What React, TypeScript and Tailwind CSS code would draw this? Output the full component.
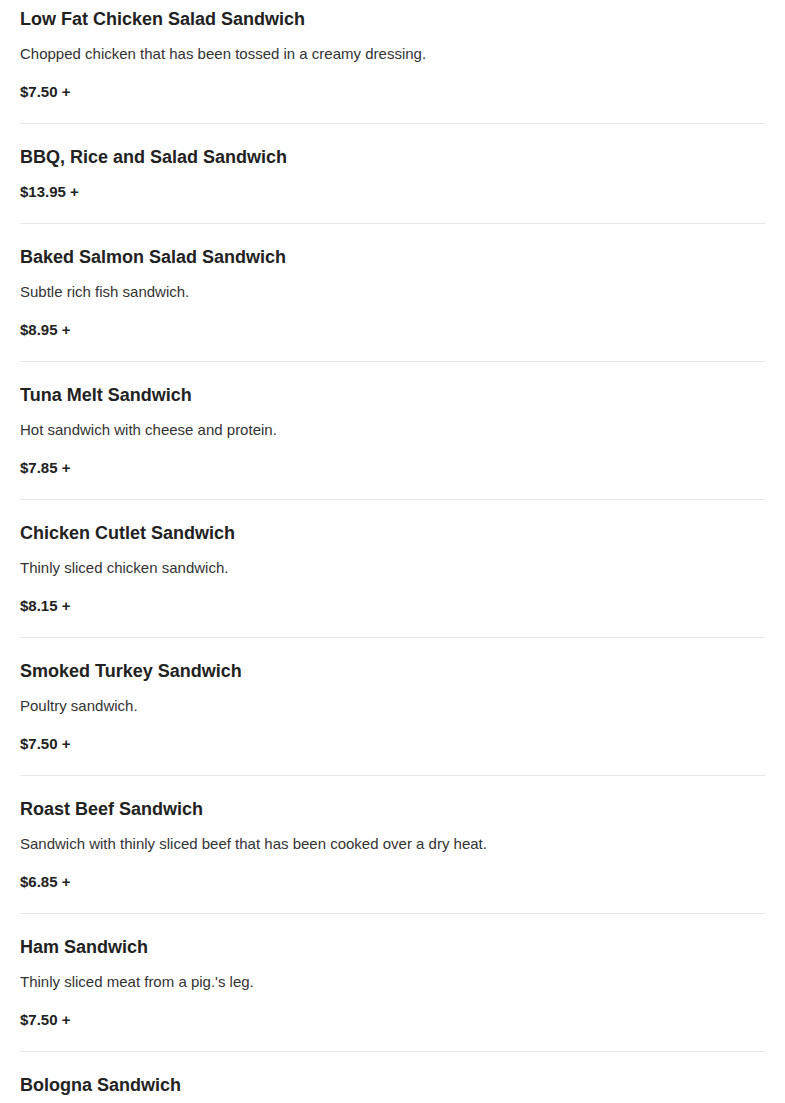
import React from "react";

interface Item {
  name: string;
  description?: string;
  price?: string;
}

const items: Item[] = [
  {
    name: "Low Fat Chicken Salad Sandwich",
    description: "Chopped chicken that has been tossed in a creamy dressing.",
    price: "$7.50 +",
  },
  { name: "BBQ, Rice and Salad Sandwich", price: "$13.95 +" },
  {
    name: "Baked Salmon Salad Sandwich",
    description: "Subtle rich fish sandwich.",
    price: "$8.95 +",
  },
  {
    name: "Tuna Melt Sandwich",
    description: "Hot sandwich with cheese and protein.",
    price: "$7.85 +",
  },
  {
    name: "Chicken Cutlet Sandwich",
    description: "Thinly sliced chicken sandwich.",
    price: "$8.15 +",
  },
  {
    name: "Smoked Turkey Sandwich",
    description: "Poultry sandwich.",
    price: "$7.50 +",
  },
  {
    name: "Roast Beef Sandwich",
    description:
      "Sandwich with thinly sliced beef that has been cooked over a dry heat.",
    price: "$6.85 +",
  },
  {
    name: "Ham Sandwich",
    description: "Thinly sliced meat from a pig.'s leg.",
    price: "$7.50 +",
  },
  // only the title of this one fits in the viewport
  { name: "Bologna Sandwich" },
];

const MenuItem = ({ item, first }: { item: Item; first: boolean }) => (
  <div
    className={`${first ? "pt-[8px]" : "pt-[22px]"} ${
      item.price ? "pb-[22px] border-b border-[#e6e6e6]" : "pb-[7px]"
    }`}
  >
    <h3
      className={`text-[18px] leading-[22px] font-bold text-[#222] ${
        item.price ? "mb-[15px]" : ""
      }`}
    >
      {item.name}
    </h3>
    {item.description && (
      <p className="text-[15px] leading-[18px] text-[#333] mb-[20px]">
        {item.description}
      </p>
    )}
    {item.price && (
      <p className="text-[15px] leading-[18px] font-bold text-[#222]">
        {item.price}
      </p>
    )}
  </div>
);

const App = () => {
  return (
    <div
      className="bg-white min-h-screen px-5"
      style={{ fontFamily: '"Liberation Sans", Arial, sans-serif' }}
    >
      {items.map((item, i) => (
        <MenuItem key={item.name} item={item} first={i === 0} />
      ))}
    </div>
  );
};

export default App;
